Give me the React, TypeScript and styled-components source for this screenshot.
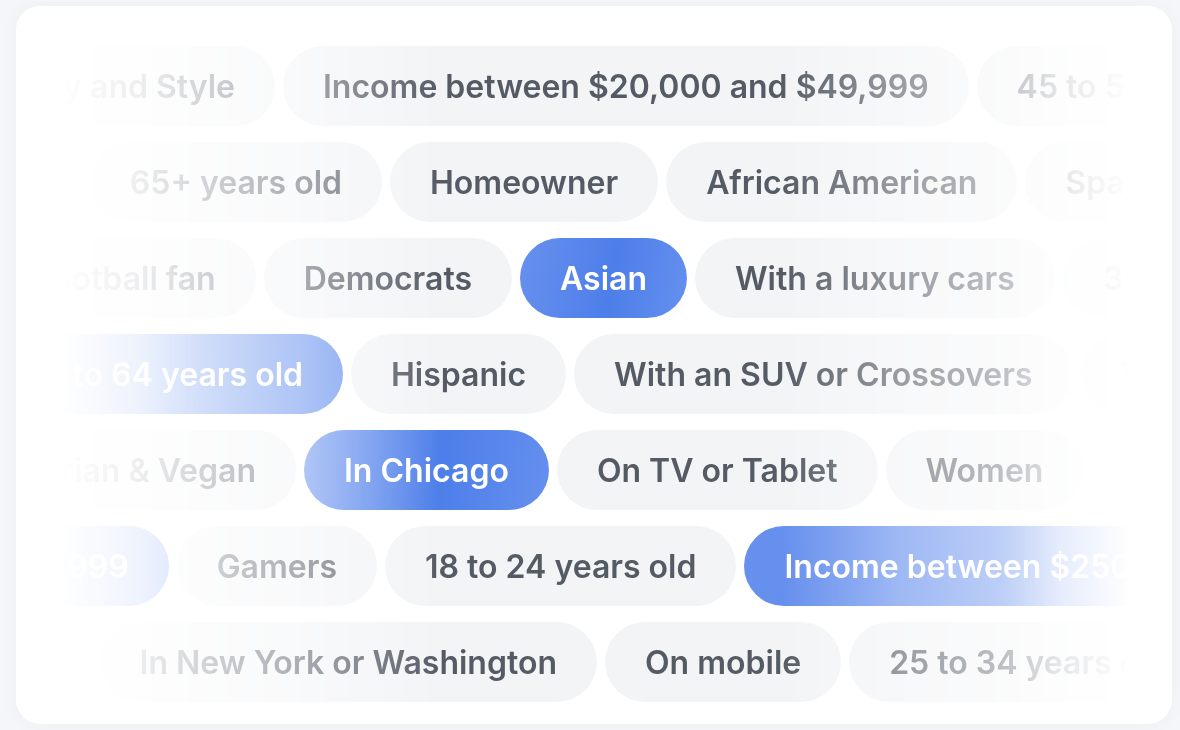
import React from "react";
import styled, { createGlobalStyle } from "styled-components";

const GlobalStyle = createGlobalStyle`
  html, body {
    margin: 0;
    padding: 0;
    background: #f4f6f9;
  }
  body {
    font-family: Inter, "Noto Sans", "Liberation Sans", sans-serif;
    -webkit-font-smoothing: antialiased;
  }
`;

const Page = styled.div`
  width: 1180px;
  height: 730px;
  box-sizing: border-box;
  padding: 6px 8px 0 16px;
  overflow: hidden;
`;

const Card = styled.section`
  height: 718px;
  box-sizing: border-box;
  padding: 40px 0 22px;
  background: #ffffff;
  border-radius: 24px;
  box-shadow: 0 0 22px rgba(30, 41, 59, 0.03);
  overflow: hidden;
`;

const fade = `linear-gradient(to right,
  rgba(0,0,0,0) 44px,
  rgba(0,0,0,0.1) 122px,
  rgba(0,0,0,0.5) 284px,
  #000 424px,
  #000 764px,
  rgba(0,0,0,0.6) 884px,
  rgba(0,0,0,0.4) 984px,
  rgba(0,0,0,0.15) 1044px,
  rgba(0,0,0,0) 1114px)`;

const Rows = styled.div`
  display: flex;
  flex-direction: column;
  gap: 16px;
  overflow: hidden;
  -webkit-mask-image: ${fade};
  mask-image: ${fade};
`;

const Row = styled.div<{ $anchor: number }>`
  display: grid;
  grid-template-columns: ${(p) => p.$anchor}px 1fr;
  height: 80px;
`;

const Before = styled.div`
  display: flex;
  justify-content: flex-end;
  gap: 8px;
  padding-right: 8px;
  min-width: 0;
`;

const After = styled.div`
  display: flex;
  gap: 8px;
  min-width: 0;
`;

const Pill = styled.div<{ $active?: boolean }>`
  flex-shrink: 0;
  display: flex;
  align-items: center;
  height: 80px;
  box-sizing: border-box;
  padding: 0 40px;
  border-radius: 40px;
  white-space: nowrap;
  font-size: 32px;
  font-weight: 600;
  color: ${(p) => (p.$active ? "#ffffff" : "#555b65")};
  background: ${(p) =>
    p.$active
      ? "linear-gradient(100deg, #6891ee 0%, #4d7ee9 55%, #5a88ec 80%, #6690ee 100%)"
      : "#f3f4f6"};
`;

type RowData = { anchor: number; before: string[]; after: string[]; active: string[] };

const rows: RowData[] = [
  {
    anchor: 267,
    before: ["Beauty and Style"],
    after: ["Income between $20,000 and $49,999", "45 to 54 years old"],
    active: [],
  },
  {
    anchor: 374,
    before: ["Spanish speakers", "65+ years old"],
    after: ["Homeowner", "African American", "Spanish speakers"],
    active: [],
  },
  {
    anchor: 504,
    before: ["Football fan", "Democrats"],
    after: ["Asian", "With a luxury cars", "35 to 44 years old"],
    active: ["Asian"],
  },
  {
    anchor: 335,
    before: ["55 to 64 years old"],
    after: ["Hispanic", "With an SUV or Crossovers", "Veterans"],
    active: ["55 to 64 years old"],
  },
  {
    anchor: 288,
    before: ["Vegetarian & Vegan"],
    after: ["In Chicago", "On TV or Tablet", "Women"],
    active: ["In Chicago"],
  },
  {
    anchor: 369,
    before: ["Income between $100,000 and $149,999", "Gamers"],
    after: ["18 to 24 years old", "Income between $250,000 and $499,999"],
    active: ["Income between $100,000 and $149,999", "Income between $250,000 and $499,999"],
  },
  {
    anchor: 589,
    before: ["Parents", "In New York or Washington"],
    after: ["On mobile", "25 to 34 years old"],
    active: [],
  },
];

export default function App() {
  return (
    <>
      <GlobalStyle />
      <Page>
        <Card>
          <Rows>
            {rows.map((r, i) => (
              <Row key={i} $anchor={r.anchor}>
                <Before>
                  {r.before.map((t) => (
                    <Pill key={t} $active={r.active.includes(t)}>
                      {t}
                    </Pill>
                  ))}
                </Before>
                <After>
                  {r.after.map((t) => (
                    <Pill key={t} $active={r.active.includes(t)}>
                      {t}
                    </Pill>
                  ))}
                </After>
              </Row>
            ))}
          </Rows>
        </Card>
      </Page>
    </>
  );
}
